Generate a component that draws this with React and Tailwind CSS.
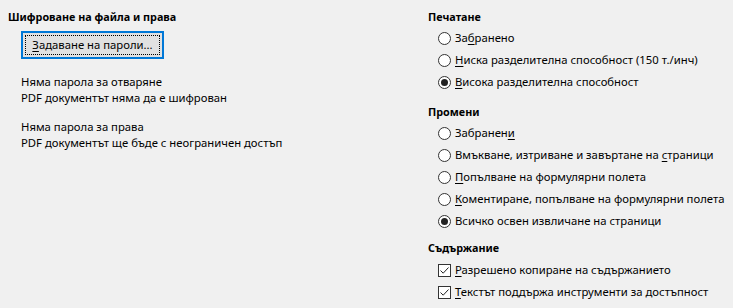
import React from 'react';

const font = { fontFamily: '"Noto Sans", "DejaVu Sans", sans-serif' };

const U = ({ children }) => <span className="underline underline-offset-2">{children}</span>;

const Radio = ({ checked, children }) => (
  <div className="flex items-center h-[22px] pl-[10px]">
    <span className="w-[13px] h-[13px] rounded-full border border-[#333] bg-white flex items-center justify-center shrink-0">
      {checked && <span className="w-[7px] h-[7px] rounded-full bg-[#222]" />}
    </span>
    <span className="ml-[4px] whitespace-nowrap">{children}</span>
  </div>
);

const Check = ({ children }) => (
  <div className="flex items-center h-[22px] pl-[10px]">
    <span className="w-[13px] h-[13px] border border-[#333] bg-white flex items-center justify-center shrink-0">
      <svg width="11" height="11" viewBox="0 0 11 11">
        <path d="M1.5 5.5 L4.2 8.2 L9.5 2.5" fill="none" stroke="#222" strokeWidth="1" />
      </svg>
    </span>
    <span className="ml-[4px] whitespace-nowrap">{children}</span>
  </div>
);

const Header = ({ children, className = '' }) => (
  <div className={`font-bold text-[10.8px] leading-[16px] h-[16px] ${className}`}>{children}</div>
);

export default function App() {
  return (
    <div className="w-[733px] h-[308px] bg-[#f0f0f0] text-[11.3px] text-black flex overflow-hidden" style={font}>
      <div className="w-[428px] shrink-0 pl-[8px] pt-[9px]">
        <Header>Шифроване на файла и права</Header>
        <div className="ml-[13px] mt-[6px] w-[143px] h-[28px] border-2 border-[#0078d7] bg-[#e1e1e1] p-[2px]">
          <div className="w-full h-full border border-dotted border-black flex items-center justify-center leading-none">
            <span><U>З</U>адаване на пароли...</span>
          </div>
        </div>
        <div className="ml-[13px] mt-[15px] leading-[16px]">
          <div>Няма парола за отваряне</div>
          <div>PDF документът няма да е шифрован</div>
        </div>
        <div className="ml-[13px] mt-[13px] leading-[16px]">
          <div>Няма парола за права</div>
          <div>PDF документът ще бъде с неограничен достъп</div>
        </div>
      </div>
      <div className="flex-1 min-w-0 pt-[9px]">
        <Header>Печатане</Header>
        <div className="mt-[2px]">
          <Radio>За<U>б</U>ранено</Radio>
          <Radio><U>Н</U>иска разделителна способност (150 т./инч)</Radio>
          <Radio checked><U>В</U>исока разделителна способност</Radio>
        </div>
        <Header className="mt-[11px]">Промени</Header>
        <div className="mt-[2px]">
          <Radio>Забранен<U>и</U></Radio>
          <Radio>Вмъкване, изтриване и завъртане на <U>с</U>траници</Radio>
          <Radio><U>П</U>опълване на формулярни полета</Radio>
          <Radio><U>К</U>оментиране, попълване на формулярни полета</Radio>
          <Radio checked>Всичко освен извличане на страници</Radio>
        </div>
        <Header className="mt-[8px]">Съдържание</Header>
        <div className="mt-[3px]">
          <Check><U>Р</U>азрешено копиране на съдържанието</Check>
          <Check><U>Т</U>екстът поддържа инструменти за достъпност</Check>
        </div>
      </div>
    </div>
  );
}
